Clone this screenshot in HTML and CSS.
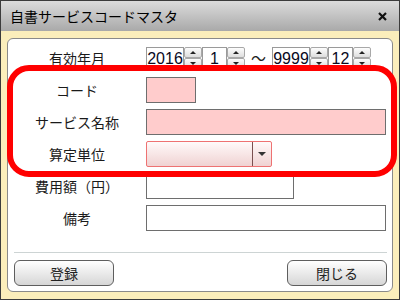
FILE: index.html
```html
<!DOCTYPE html>
<html lang="ja">
<head>
    <meta charset="UTF-8">
    <title>自書サービスコードマスタ</title>
    <link rel="stylesheet" href="styles.css">
</head>
<body>

    <div class="window">
        <div class="titlebar">
            <span class="title">自書サービスコードマスタ</span>
            <svg class="close" width="9" height="9" viewBox="0 0 9 9">
                <path d="M1 1 L8 8 M8 1 L1 8" stroke="#111" stroke-width="2.2" fill="none"/>
            </svg>
        </div>

        <div class="client">
            <div class="panel">
                <div class="row period">
                    <div class="label">有効年月</div>
                    <div class="spin">
                        <div class="num year">2016</div>
                        <div class="arrows"><span class="up"></span><span class="down"></span></div>
                    </div>
                    <div class="spin">
                        <div class="num month">1</div>
                        <div class="arrows"><span class="up"></span><span class="down"></span></div>
                    </div>
                    <div class="tilde">〜</div>
                    <div class="spin">
                        <div class="num year">9999</div>
                        <div class="arrows"><span class="up"></span><span class="down"></span></div>
                    </div>
                    <div class="spin">
                        <div class="num month">12</div>
                        <div class="arrows"><span class="up"></span><span class="down"></span></div>
                    </div>
                </div>

                <div class="row first">
                    <div class="label">コード</div>
                    <div class="field required code"></div>
                </div>
                <div class="row">
                    <div class="label">サービス名称</div>
                    <div class="field required wide"></div>
                </div>
                <div class="row">
                    <div class="label">算定単位</div>
                    <div class="select">
                        <div class="select-value"></div>
                        <div class="select-btn"><span class="caret"></span></div>
                    </div>
                </div>
                <div class="row">
                    <div class="label">費用額（円）</div>
                    <div class="field cost"></div>
                </div>
                <div class="row">
                    <div class="label">備考</div>
                    <div class="field wide"></div>
                </div>

                <div class="sep"></div>

                <div class="buttons">
                    <button>登録</button>
                    <button>閉じる</button>
                </div>
            </div>
        </div>

        <!-- annotation frame -->
        <div class="mark"></div>
    </div>

</body>
</html>
```

FILE: styles.css
```css
body {
    margin: 0;
    font-family: "Noto Sans CJK JP", "Noto Sans", sans-serif;
    font-size: 14px;
    color: #1a1a1a;
}

.window {
    position: relative;
    width: 400px;
    height: 300px;
    box-sizing: border-box;
    border: 1px solid #3c3c3c;
    background: #fbeebb;
    display: flex;
    flex-direction: column;
}

.titlebar {
    height: 30px;
    flex: none;
    background: linear-gradient(#dcdcdc, #a9a9a9);
    display: flex;
    align-items: center;
    justify-content: space-between;
    padding: 0 12px 0 9px;
}

.title {
    font-size: 14px;
    color: #000;
}

.client {
    flex: 1;
    padding: 7px 6px 7px 6px;
    display: flex;
}

.panel {
    flex: 1;
    background: #fff;
    border: 1px solid #8a8a8a;
    border-radius: 6px;
    padding: 8px 5px 5px 6px;
    display: flex;
    flex-direction: column;
}

.row {
    display: flex;
    align-items: center;
    height: 26px;
    margin-top: 6px;
}

.row.period {
    height: 21px;
    margin-top: 0;
}

.row.first {
    margin-top: 9px;
}

.label {
    width: 126px;
    margin-right: 6px;
    text-align: center;
    line-height: 20px;
}

/* spin boxes */
.spin {
    display: flex;
    height: 21px;
}

.num {
    box-sizing: border-box;
    height: 21px;
    border: 1px solid #9a9a9a;
    font-family: "Liberation Sans", Arial, sans-serif;
    font-size: 16px;
    line-height: 16px;
    padding-top: 3px;
    text-align: center;
    color: #0a0a1e;
}

.num.year {
    width: 38px;
}

.num.month {
    width: 25px;
}

.arrows {
    width: 18px;
    display: flex;
    flex-direction: column;
}

.arrows span {
    flex: 1;
    box-sizing: border-box;
    border: 1px solid #a8a8a8;
    border-radius: 2px;
    background: linear-gradient(#fdfdfd, #dedede);
    position: relative;
}

.arrows span::after {
    content: "";
    position: absolute;
    left: 5px;
    top: 3px;
    border-left: 3px solid transparent;
    border-right: 3px solid transparent;
}

.arrows .up::after {
    border-bottom: 3px solid #222;
}

.arrows .down::after {
    border-top: 3px solid #222;
}

.tilde {
    width: 27px;
    text-align: center;
    font-size: 15px;
    color: #222;
}

/* inputs */
.field {
    box-sizing: border-box;
    height: 26px;
    border: 1px solid #6e6e6e;
    background: #fff;
}

.field.required {
    background: #ffcccc;
}

.field.code {
    width: 50px;
}

.field.wide {
    width: 240px;
}

.field.cost {
    width: 148px;
}

.select {
    box-sizing: border-box;
    width: 126px;
    height: 26px;
    border: 1px solid #ee7272;
    border-radius: 2px;
    background: linear-gradient(#fffafa, #f0d2d2);
    display: flex;
}

.select-value {
    flex: 1;
    border-right: 1px solid #7a5050;
}

.select-btn {
    width: 18px;
    display: flex;
    align-items: center;
    justify-content: center;
}

.caret {
    border-left: 4px solid transparent;
    border-right: 4px solid transparent;
    border-top: 4px solid #333;
}

.sep {
    height: 1px;
    background: #cdd4d4;
    margin-top: 21px;
}

.buttons {
    display: flex;
    justify-content: space-between;
    margin-top: 7px;
}

button {
    width: 100px;
    height: 26px;
    border: 1px solid #5e5e5e;
    border-radius: 6px;
    background: linear-gradient(#ffffff, #d6d6d6);
    font-family: "Noto Sans CJK JP", sans-serif;
    font-size: 14px;
    color: #222;
    padding: 0;
}

.mark {
    position: absolute;
    left: 6px;
    top: 64px;
    width: 390px;
    height: 112px;
    box-sizing: border-box;
    border: 6px solid #ff0000;
    border-radius: 22px;
}
```
